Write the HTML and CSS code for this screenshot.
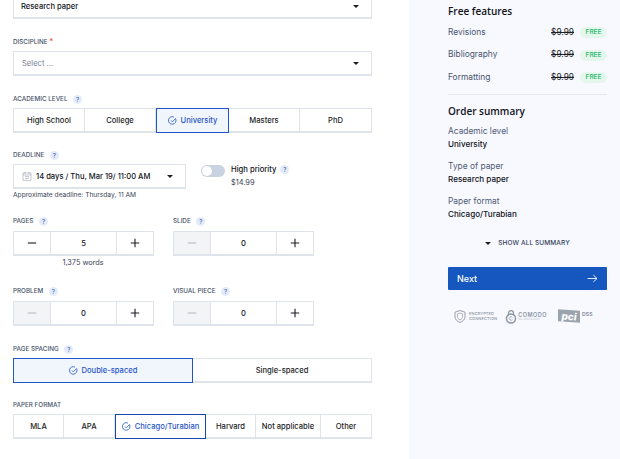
FILE: index.html
```html
<!DOCTYPE html>
<html lang="en">
<head>
<meta charset="utf-8">
<title>Order form</title>
<link rel="stylesheet" href="styles.css">
</head>
<body>
<svg class="defs" width="0" height="0" aria-hidden="true">
  <symbol id="check" viewBox="0 0 10 10"><path d="M8.6 3.4A4.2 4.2 0 1 1 6.6 1.2" fill="none" stroke="currentColor" stroke-width=".9"/><path d="M3.2 4.9l1.6 1.6 3.9-4" fill="none" stroke="currentColor" stroke-width=".9"/></symbol>
  <symbol id="minus" viewBox="0 0 10 10"><path d="M.8 5h8.4" stroke="currentColor" stroke-width="1.1"/></symbol>
  <symbol id="plus" viewBox="0 0 10 10"><path d="M.8 5h8.4M5 .8v8.4" stroke="currentColor" stroke-width="1.1"/></symbol>
</svg>
<div class="page">
  <main class="form">
    <div class="select first"><span>Research paper</span><i class="caret"></i></div>

    <div class="label gap-discipline">DISCIPLINE <b class="req">*</b></div>
    <div class="select placeholder"><span>Select ...</span><i class="caret"></i></div>

    <div class="label gap-23">ACADEMIC LEVEL <i class="q">?</i></div>
    <div class="seg seg-level">
      <div class="opt">High School</div>
      <div class="opt">College</div>
      <div class="opt on"><svg class="ck"><use href="#check"/></svg>University</div>
      <div class="opt">Masters</div>
      <div class="opt">PhD</div>
    </div>

    <div class="label gap-22">DEADLINE <i class="q">?</i></div>
    <div class="deadline-row">
      <div class="deadline-col">
        <div class="select deadline">
          <svg class="cal" viewBox="0 0 10 10"><path d="M1 2h8v7.4H1zM1 4h8M3 .8v2M7 .8v2M3 5.6h4M3 7.4h4" fill="none" stroke="#9aa3b2" stroke-width=".6"/></svg>
          <span>14 days / Thu, Mar 19/ 11:00 AM</span><i class="caret"></i>
        </div>
        <div class="hint">Approximate deadline: Thursday, 11 AM</div>
      </div>
      <div class="toggle"><i class="knob"></i></div>
      <div class="priority">
        <div class="pname">High priority <i class="q">?</i></div>
        <div class="pprice">$14.99</div>
      </div>
    </div>

    <div class="steppers row-pages">
      <div class="stepcol">
        <div class="label">PAGES <i class="q">?</i></div>
        <div class="stepper">
          <div class="sbtn"><svg class="ic"><use href="#minus"/></svg></div><div class="sval">5</div><div class="sbtn"><svg class="ic"><use href="#plus"/></svg></div>
        </div>
        <div class="words">1,375 words</div>
      </div>
      <div class="stepcol">
        <div class="label">SLIDE <i class="q">?</i></div>
        <div class="stepper">
          <div class="sbtn off"><svg class="ic"><use href="#minus"/></svg></div><div class="sval">0</div><div class="sbtn"><svg class="ic"><use href="#plus"/></svg></div>
        </div>
      </div>
    </div>

    <div class="steppers row-problem">
      <div class="stepcol">
        <div class="label">PROBLEM <i class="q">?</i></div>
        <div class="stepper">
          <div class="sbtn off"><svg class="ic"><use href="#minus"/></svg></div><div class="sval">0</div><div class="sbtn"><svg class="ic"><use href="#plus"/></svg></div>
        </div>
      </div>
      <div class="stepcol">
        <div class="label">VISUAL PIECE <i class="q">?</i></div>
        <div class="stepper">
          <div class="sbtn off"><svg class="ic"><use href="#minus"/></svg></div><div class="sval">0</div><div class="sbtn"><svg class="ic"><use href="#plus"/></svg></div>
        </div>
      </div>
    </div>

    <div class="label gap-23">PAGE SPACING <i class="q">?</i></div>
    <div class="seg seg-spacing">
      <div class="opt on fill"><svg class="ck"><use href="#check"/></svg>Double-spaced</div>
      <div class="opt">Single-spaced</div>
    </div>

    <div class="label gap-22">PAPER FORMAT</div>
    <div class="seg seg-format">
      <div class="opt">MLA</div>
      <div class="opt">APA</div>
      <div class="opt on"><svg class="ck"><use href="#check"/></svg>Chicago/Turabian</div>
      <div class="opt">Harvard</div>
      <div class="opt">Not applicable</div>
      <div class="opt">Other</div>
    </div>
  </main>

  <aside class="side">
    <h2 class="h-free">Free features</h2>
    <div class="feat"><span class="fname">Revisions</span><s>$9.99</s><em>FREE</em></div>
    <div class="feat"><span class="fname">Bibliography</span><s>$9.99</s><em>FREE</em></div>
    <div class="feat"><span class="fname">Formatting</span><s>$9.99</s><em>FREE</em></div>
    <hr class="rule">
    <h2 class="h-order">Order summary</h2>
    <div class="sum"><div class="k">Academic level</div><div class="v">University</div></div>
    <div class="sum"><div class="k">Type of paper</div><div class="v">Research paper</div></div>
    <div class="sum"><div class="k">Paper format</div><div class="v">Chicago/Turabian</div></div>
    <div class="showall"><i class="caret small"></i>SHOW ALL SUMMARY</div>
    <div class="next"><span>Next</span><svg class="arrow" viewBox="0 0 12 10"><path d="M.5 5h10.500M7 1.200 11 5 7 8.800" fill="none" stroke="#fff" stroke-width="1"/></svg></div>
    <div class="trust">
      <div class="badge b-enc">
        <svg class="shield" viewBox="0 0 12 13"><path d="M6 .5 11 2.200V7c0 2.600-2.400 4.400-5 5.500C3.400 11.400 1 9.600 1 7V2.200z" fill="none" stroke="#8b94a3" stroke-width=".9"/><path d="M6 3 8.600 4v2.800C8.600 8.200 7.300 9.200 6 9.900 4.700 9.200 3.400 8.200 3.400 6.800V4z" fill="none" stroke="#8b94a3" stroke-width=".7"/></svg>
        <div class="enc"><div>ENCRYPTED</div><div>CONNECTION</div></div>
      </div>
      <div class="badge b-com">
        <svg class="lock" viewBox="0 0 12 14"><path d="M3.500 6V3.700a2.500 2.500 0 0 1 5 0V6" fill="none" stroke="#8b94a3" stroke-width="1.200"/><circle cx="6" cy="9" r="4.500" fill="none" stroke="#8b94a3" stroke-width="1.500"/><path d="M7.400 8A1.700 1.700 0 1 0 7.400 10" fill="none" stroke="#8b94a3" stroke-width=".8"/></svg>
        <div class="com"><div class="com1">COMODO</div><div class="com2">SSL CERTIFICATE</div></div>
      </div>
      <div class="badge b-pci">
        <div class="pci">pci</div><div class="dss"><div>DSS</div></div>
      </div>
    </div>
  </aside>
</div>
</body>
</html>
```

FILE: styles.css
```css
* { box-sizing: border-box; }
html, body { margin: 0; padding: 0; height: 459px; overflow: hidden; background: #fff; }
body { font-family: Inter, "Liberation Sans", sans-serif; font-size: 7.6px; font-weight: 500; color: #10131a; }
.defs { position: absolute; }
.page { display: flex; height: 459px; }
.form { width: 409px; padding: 0 37px 0 13px; flex: none; }
.side { flex: 1; background: #f8f9ff; padding: 0 13px 0 39px; }

.select { height: 25px; border: 1px solid #dfe3ea; border-bottom-width: 2px; display: flex; align-items: center; padding: 0 12px 0 7px; background: #fff; white-space: nowrap; }
.select span { flex: 1; }
.first { margin-top: -6px; }
.placeholder { color: #77829a; padding-left: 8px; font-weight: 400; }
.caret { width: 0; height: 0; border-left: 3px solid transparent; border-right: 3px solid transparent; border-top: 3px solid #1a1d24; flex: none; }
.label { font-size: 6.3px; line-height: 10px; height: 10px; color: #4a5468; display: flex; align-items: center; white-space: pre; margin-bottom: 4px; }
.gap-discipline { margin-top: 18px; margin-bottom: 4px; }
.gap-23 { margin-top: 18px; margin-bottom: 4px; }
.gap-22 { margin-top: 17px; margin-bottom: 4px; }
.req { color: #ef4b3a; font-weight: 400; font-size: 8px; margin-top: -3px; }
.q { width: 9px; height: 9px; border-radius: 50%; background: #e4ebf8; color: #4a66b8; font-size: 6px; line-height: 9px; text-align: center; font-style: normal; margin-left: 4px; flex: none; }

.seg { display: grid; height: 25px; }
.seg-level { grid-template-columns: 72px 71px 73px 71px 72px; }
.seg-spacing { grid-template-columns: 180px 179px; }
.seg-format { grid-template-columns: 51px 51px 91px 50px 65px 51px; }
.opt { border: 1px solid #dfe3ea; border-bottom-width: 2px; border-left-width: 0; display: flex; align-items: center; justify-content: center; color: #1a1d24; white-space: nowrap; background: #fff; }
.opt:first-child { border-left-width: 1px; }
.opt.on { border: 1px solid #1f55c8; color: #1f55c8; background: #f1f6fd; }
.seg-format .opt.on { background: #fff; border-color: #1845ad; }
.ck { width: 9px; height: 9px; margin-right: 4px; flex: none; }

.deadline-row { display: flex; align-items: flex-start; }
.deadline-col { width: 173px; }
.deadline { padding: 0 12px 0 8px; }
.deadline span { color: #10131a; }
.cal { width: 10px; height: 10px; margin-right: 4px; flex: none; }
.hint { font-size: 6.65px; font-weight: 400; line-height: 10px; margin-top: 1px; color: #3c4556; }
.toggle { width: 24px; height: 12px; border-radius: 6px; background: #c9d2df; margin: 1px 0 0 15px; position: relative; flex: none; }
.knob { position: absolute; left: 1px; top: 1px; width: 10px; height: 10px; border-radius: 50%; background: #fff; }
.priority { margin-left: 6px; }
.pname { font-size: 7.65px; line-height: 11px; display: flex; align-items: center; }
.pprice { font-size: 7.4px; font-weight: 400; line-height: 10px; margin-top: 3px; color: #3c4556; }

.steppers { display: flex; gap: 19px; }
.row-pages { margin-top: 16px; height: 56px; }
.row-problem { margin-top: 14px; }
.stepcol { width: 141px; }
.row-pages .label, .row-problem .label { margin-bottom: 5px; }
.stepper { display: grid; grid-template-columns: 38px 65px 38px; height: 25px; }
.sbtn { border: 1px solid #dfe3ea; border-bottom-width: 2px; display: flex; align-items: center; justify-content: center; color: #1a1d24; }
.sbtn.off { background: #f3f4f6; color: #b7bec9; }
.sval { border-top: 1px solid #dfe3ea; border-bottom: 2px solid #dfe3ea; display: flex; align-items: center; justify-content: center; }
.ic { width: 10px; height: 10px; }
.words { text-align: center; font-size: 7.3px; font-weight: 400; line-height: 10px; margin-top: 2px; color: #3c4556; padding-right: 1px; }

.side h2 { font-family: "Open Sans", Inter, sans-serif; font-weight: 600; font-size: 10px; line-height: 12px; margin: 0; color: #10131a; }
.h-free { padding-top: 5px; }
.feat { display: flex; align-items: center; height: 11px; margin-top: 11.5px; }
.h-free + .feat { margin-top: 9px; }
.fname { flex: 1; font-size: 8.4px; font-weight: 400; color: #47536c; }
.feat s { font-size: 8.3px; font-weight: 400; color: #1a1d24; margin-right: 6px; }
.feat em { width: 27px; height: 11px; border-radius: 6px; background: #e5f7ec; color: #1fb765; font-style: normal; font-size: 6.5px; line-height: 11px; text-align: center; position: relative; top: 1px; }
.rule { border: 0; border-top: 1px solid #e4e7ee; margin: 12px 0 0; }
.h-order { margin-top: 10px !important; }
.sum { margin-top: 9px; line-height: 13px; }
.h-order + .sum { margin-top: 8px; }
.k { color: #4f5b75; font-size: 8.4px; font-weight: 400; }
.v { font-size: 8.1px; color: #10131a; font-weight: 500; }
.showall { display: flex; align-items: center; justify-content: center; font-size: 6.5px; font-weight: 500; color: #33405a; margin-top: 17px; height: 10px; letter-spacing: .1px; }
.caret.small { margin-right: 7px; border-top-color: #1a1d24; }
.next { height: 23px; background: #1556bf; border-radius: 1px; margin-top: 19px; display: flex; align-items: center; justify-content: space-between; padding: 0 9px; color: #fff; font-size: 9px; font-weight: 500; }
.arrow { width: 11px; height: 9px; }
.trust { display: flex; align-items: center; margin-top: 18px; margin-left: 6px; height: 16px; color: #8b94a3; }
.badge { display: flex; align-items: center; flex: none; }
.shield { width: 12px; height: 13px; margin-right: 3px; }
.enc { font-size: 4px; line-height: 5px; letter-spacing: .1px; }
.b-com { margin-left: 8px; }
.lock { width: 12px; height: 15px; margin-right: 1px; }
.com1 { font-size: 5.5px; line-height: 6px; letter-spacing: .5px; font-weight: 600; }
.com2 { font-size: 2.5px; line-height: 3px; color: #c2c7d0; }
.b-pci { margin-left: 11px; }
.pci { background: #9ba3af; color: #fff; font-weight: 800; font-style: italic; font-size: 10px; line-height: 12px; width: 22px; text-align: center; transform: skewY(4deg); }
.dss { font-size: 5px; font-weight: 700; margin-left: 2px; margin-top: -4px; letter-spacing: .2px; }
```
